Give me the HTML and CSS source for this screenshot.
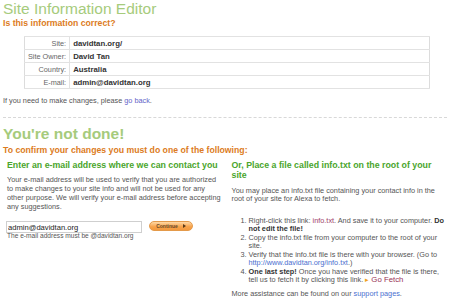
FILE: index.html
```html
<!DOCTYPE html>
<html>
<head>
<meta charset="utf-8">
<link rel="stylesheet" href="styles.css">
</head>
<body>
<h1 class="title">Site Information Editor</h1>
<h2 class="sub">Is this information correct?</h2>
<table class="info">
  <tr><td class="lbl">Site:</td><td class="val">davidtan.org/</td></tr>
  <tr><td class="lbl">Site Owner:</td><td class="val">David Tan</td></tr>
  <tr><td class="lbl">Country:</td><td class="val">Australia</td></tr>
  <tr><td class="lbl">E-mail:</td><td class="val">admin@davidtan.org</td></tr>
</table>
<p class="back">If you need to make changes, please <a class="lnk-purple" href="#">go back</a>.</p>
<div class="sep"></div>
<h1 class="title title-2">You're not done!</h1>
<h2 class="sub sub-2">To confirm your changes you must do one of the following:</h2>
<div class="cols">
  <div class="col col-left">
    <h3 class="colhead">Enter an e-mail address where we can contact you</h3>
    <p class="txt">Your e-mail address will be used to verify that you are authorized to make changes to your site info and will not be used for any other purpose. We will verify your e-mail address before accepting any suggestions.</p>
    <div class="formrow">
      <div class="field">
        <input class="email" type="text" value="admin@davidtan.org">
        <div class="hint">The e-mail address must be @davidtan.org</div>
      </div>
      <button class="cont">Continue <span class="tri"></span></button>
    </div>
  </div>
  <div class="col col-right">
    <h3 class="colhead">Or, Place a file called info.txt on the root of your site</h3>
    <p class="txt txt-r">You may place an info.txt file containing your contact info in the root of your site for Alexa to fetch.</p>
    <ol class="steps">
      <li>Right-click this link: <a class="lnk-maroon" href="#">info.txt</a>. And save it to your computer. <b>Do not edit the file!</b></li>
      <li>Copy the info.txt file from your computer to the root of your site.</li>
      <li>Verify that the info.txt file is there with your browser. (Go to <a class="lnk-blue" href="#">http://www.davidtan.org/info.txt</a>.)</li>
      <li><b>One last step!</b> Once you have verified that the file is there, tell us to fetch it by clicking this link. <span class="arrow">&#9656;</span> <a class="lnk-fetch" href="#">Go Fetch</a></li>
    </ol>
    <p class="txt more">More assistance can be found on our <a class="lnk-blue" href="#">support pages</a>.</p>
  </div>
</div>
</body>
</html>
```

FILE: styles.css
```css
html, body {
  margin: 0;
  padding: 0;
  background: #fff;
}
body {
  padding: 0 3px;
  font-family: "Liberation Sans", Arial, sans-serif;
  color: #444;
}
.title {
  margin: 0;
  font-size: 15.5px;
  line-height: 17px;
  font-weight: normal;
  color: #a6cb7c;
}
.title-2 {
  font-weight: bold;
  margin-top: 7px;
}
.sub {
  margin: 1px 0 0;
  font-size: 8.7px;
  line-height: 10px;
  font-weight: bold;
  color: #dc7b22;
}
.sub-2 {
  margin-top: 3px;
}
.info {
  margin: 8px 0 0 21px;
  width: 406px;
  border-collapse: collapse;
  border: 1px solid #dcdcdc;
}
.info td {
  height: 12px;
  padding: 0 3px;
  border-top: 1px solid #e2e2e2;
  border-bottom: 1px solid #e2e2e2;
}
.lbl {
  width: 36px;
  text-align: right;
  font-size: 7.3px;
  color: #666;
  border-right: 1px solid #e2e2e2;
  white-space: nowrap;
}
.val {
  font-size: 7.8px;
  font-weight: bold;
  color: #333;
}
.back {
  margin: 8px 0 0;
  font-size: 7.3px;
  line-height: 8.7px;
  color: #555;
}
a {
  text-decoration: none;
}
.lnk-purple { color: #6464c8; }
.lnk-blue { color: #4a6fcf; }
.lnk-maroon { color: #a0406a; }
.lnk-fetch { color: #993355; font-size: 7.8px; }
.arrow { color: #f0a020; font-size: 7px; }
.sep {
  margin-top: 11px;
  border-top: 1px dashed #d8d8d8;
}
.cols {
  display: flex;
  margin-top: 5px;
}
.col-left {
  width: 217px;
  padding-left: 4px;
}
.col-right {
  width: 216px;
  padding-left: 8px;
}
.colhead {
  margin: 0;
  font-size: 8.8px;
  line-height: 10.7px;
  font-weight: bold;
  color: #4aa52c;
}
.txt {
  margin: 6px 0 0;
  font-size: 7.3px;
  line-height: 8.7px;
  color: #555;
}
.txt-r {
  margin-top: 5.5px;
}
.formrow {
  display: flex;
  align-items: flex-start;
  margin-top: 10px;
}
.field {
  width: 136px;
}
.email {
  display: block;
  box-sizing: border-box;
  width: 136px;
  height: 12px;
  margin: 0 0 0 -1px;
  padding: 0 1px;
  border: 1px solid #cfcfcf;
  font-family: "Liberation Sans", Arial, sans-serif;
  font-size: 7.6px;
  color: #222;
  outline: none;
}
.hint {
  margin-top: -1px;
  font-size: 6.6px;
  line-height: 8px;
  color: #555;
  white-space: nowrap;
}
.cont {
  display: flex;
  align-items: center;
  justify-content: center;
  gap: 5px;
  margin-left: 6px;
  width: 44px;
  height: 10px;
  padding: 0;
  border: 1px solid #e49a4a;
  border-radius: 5px;
  background: linear-gradient(#ffd9a6, #f7a24a 60%, #f39a3e);
  font-family: "Liberation Sans", Arial, sans-serif;
  font-size: 5px;
  font-weight: bold;
  color: #6a4a2a;
}
.tri {
  width: 0;
  height: 0;
  border-left: 3px solid #5a3a1a;
  border-top: 2px solid transparent;
  border-bottom: 2px solid transparent;
}
.steps {
  margin: 12.5px 0 0;
  padding-left: 17px;
  font-size: 7.3px;
  line-height: 8px;
  color: #555;
}
.steps li {
  margin-bottom: 1px;
}
.steps b {
  color: #333;
}
.more {
  margin-top: 6px;
}
```
